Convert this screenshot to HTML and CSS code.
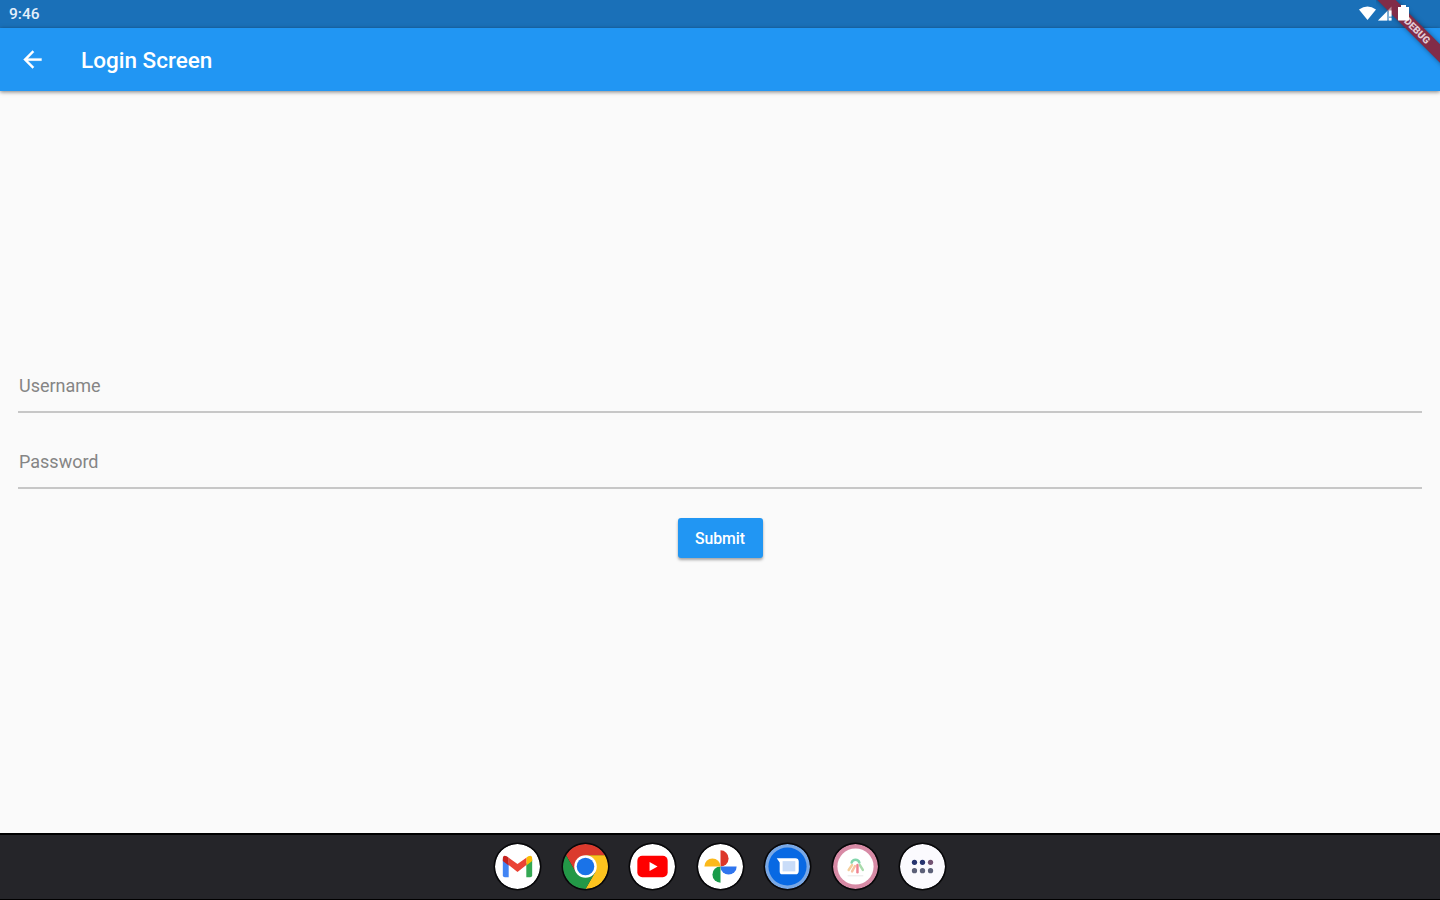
FILE: index.html
```html
<!DOCTYPE html>
<html lang="en">
<head>
    <meta charset="UTF-8">
    <meta name="viewport" content="width=device-width, initial-scale=1.0">
    <title>Login Screen</title>
    <link rel="stylesheet" href="styles.css">
</head>
<body>
    <div class="status-bar">
        <span class="clock">9:46</span>
        <svg class="status-icons" width="54" height="18" viewBox="0 0 54 18">
            <path d="M1 5.500 Q9.500 -0.500 18 5.500 L9.500 16 Z" fill="#fff"/>
            <path d="M20 16.500 L33.500 2.500 V16.500 Z" fill="#fff" fill-opacity=".45"/>
            <path d="M20 16.500 L29 7.500 V16.500 Z M31 6.500 H33.500 V12.500 H31 Z M31 14 H33.500 V16.500 H31 Z" fill="#fff"/>
            <path d="M40 3 H43 V1 H48 V3 H51 V16 Q51 16.500 50.500 16.500 H40.500 Q40 16.500 40 16 Z" fill="#fff"/>
        </svg>
    </div>
    <div class="debug-corner"><div class="debug-banner">DEBUG</div></div>

    <header class="app-bar">
        <svg class="back" width="27" height="27" viewBox="0 0 24 24">
            <path d="M20 11H7.830l5.590-5.590L12 4l-8 8 8 8 1.410-1.410L7.830 13H20v-2z" fill="#fff" stroke="#fff" stroke-width=".3"/>
        </svg>
        <h1>Login Screen</h1>
    </header>

    <main>
        <form class="login-form">
            <input type="text" name="username" placeholder="Username">
            <input type="password" name="password" placeholder="Password">
            <button type="submit">Submit</button>
        </form>
    </main>

    <nav class="taskbar">
        <!-- Gmail -->
        <svg class="app" viewBox="0 0 46 46">
            <circle cx="23" cy="23" r="23" fill="#fff"/>
            <path d="M8 15.500 L14 20 V34 H10 Q8 34 8 32 Z" fill="#4285f4"/>
            <path d="M32 20 L38 15.500 V32 Q38 34 36 34 H32 Z" fill="#34a853"/>
            <path d="M32 14 L34 12.500 Q38 10.500 38 15 V17.500 L32 22 Z" fill="#fbbc04"/>
            <path d="M14 14 L23 20.500 L32 14 V21.500 L23 28.500 L14 21.500 Z" fill="#ea4335"/>
            <path d="M14 14 L12 12.500 Q8 10.500 8 15 V17.500 L14 22 Z" fill="#c5221f"/>
        </svg>
        <!-- Chrome -->
        <svg class="app" viewBox="0 0 46 46">
            <path d="M23 23 L13 28.700 L3.080 11.500 A23 23 0 0 1 42.920 11.500 H23 Z" fill="#db3a2d"/>
            <path d="M23 11.500 H42.920 A23 23 0 0 1 23 46 L33 28.700 Z" fill="#fcc31e"/>
            <path d="M3.080 11.500 L13 28.700 L33 28.700 L23 46 A23 23 0 0 1 3.080 11.500 Z" fill="#239847"/>
            <circle cx="23" cy="23" r="11.500" fill="#fff"/>
            <circle cx="23" cy="23" r="9" fill="#1a73e8"/>
        </svg>
        <!-- YouTube -->
        <svg class="app" viewBox="0 0 46 46">
            <circle cx="23" cy="23" r="23" fill="#fff"/>
            <rect x="7.500" y="12" width="31" height="22" rx="5" fill="#f00"/>
            <path d="M20 18.300 L28.200 23 L20 27.700 Z" fill="#fff"/>
        </svg>
        <!-- Photos -->
        <svg class="app" viewBox="0 0 46 46">
            <circle cx="23" cy="23" r="23" fill="#fff"/>
            <path d="M23 23 V6.500 A8.250 8.250 0 0 1 23 23 Z" fill="#dd3629"/>
            <path d="M23 23 H39.500 A8.250 8.250 0 0 1 23 23 Z" fill="#2f75ee"/>
            <path d="M23 23 V39.500 A8.250 8.250 0 0 1 23 23 Z" fill="#189b49"/>
            <path d="M23 23 H6.500 A8.250 8.250 0 0 1 23 23 Z" fill="#fbb91b"/>
        </svg>
        <!-- Messages -->
        <svg class="app" viewBox="0 0 46 46">
            <circle cx="23" cy="23" r="23" fill="#79a8e5"/>
            <circle cx="23" cy="23" r="19.500" fill="#0869e3"/>
            <path d="M12 14.500 H31 Q34.500 14.500 34.500 18 V27 Q34.500 31 31 31 H18 Q15 31 15 28 V19 Z" fill="#fff"/>
            <rect x="18" y="17.500" width="13" height="10.500" fill="#c9dcf8"/>
        </svg>
        <!-- Suggested app -->
        <svg class="app" viewBox="0 0 46 46">
            <circle cx="23" cy="23" r="23" fill="#d78aa5"/>
            <circle cx="23" cy="23" r="18.500" fill="#fff"/>
            <g fill="none" stroke-width="2.500" stroke-linecap="round">
                <path d="M19 19 A4.200 4.200 0 0 1 27 19" stroke="#83d6ad"/>
                <path d="M16 26.500 L19.500 21.500" stroke="#f4ce9c"/>
                <path d="M19.500 28 L22.500 22.500" stroke="#f7c2a2"/>
                <path d="M25 21.500 V29" stroke="#ef8291"/>
                <path d="M27.500 21.500 L30.500 26.500" stroke="#a9dbac"/>
            </g>
            <path d="M15 32.500 H31" stroke="#e7e7e7"/>
        </svg>
        <!-- All apps -->
        <svg class="app" viewBox="0 0 46 46">
            <circle cx="23" cy="23" r="23" fill="#fbfafe"/>
            <g fill="#27346f">
                <circle cx="14.800" cy="18.700" r="2.700"/>
                <circle cx="23" cy="18.700" r="2.700"/>
                <circle cx="31.200" cy="18.700" r="2.700" fill="#735373"/>
            </g>
            <g fill="#5c6078">
                <circle cx="14.800" cy="27.300" r="2.700"/>
                <circle cx="23" cy="27.300" r="2.700"/>
                <circle cx="31.200" cy="27.300" r="2.700"/>
            </g>
        </svg>
    </nav>
</body>
</html>
```
FILE: styles.css
```css
* {
    box-sizing: border-box;
}
body {
    margin: 0;
    height: 100vh;
    display: flex;
    flex-direction: column;
    position: relative;
    overflow: hidden;
    background-color: #fafafa;
    font-family: Roboto, sans-serif;
}
.status-bar {
    height: 28px;
    padding: 0 28px 0 9px;
    display: flex;
    justify-content: space-between;
    align-items: center;
    background-color: #1a70b8;
    color: #e4effa;
}
.clock {
    font-size: 15.5px;
    font-weight: 500;
}
.status-icons {
    position: relative;
    z-index: 3;
    margin-bottom: 2px;
}
.debug-corner {
    position: absolute;
    top: 0;
    right: 0;
    width: 64px;
    height: 70px;
    overflow: hidden;
    z-index: 2;
}
.debug-banner {
    position: absolute;
    top: 21px;
    left: -17px;
    width: 110px;
    height: 13px;
    padding-left: 9px;
    transform: rotate(45deg);
    background-color: #812c48;
    box-shadow: 0 0 5px rgba(0, 0, 0, 0.4);
    color: #e3cbd5;
    font-size: 10px;
    font-weight: 900;
    line-height: 13px;
    text-align: center;
}
.app-bar {
    height: 63px;
    padding: 0 0 1px 19px;
    display: flex;
    align-items: center;
    gap: 35px;
    background-color: #2196f3;
    box-shadow: 0 1px 4px rgba(0, 0, 0, 0.5);
    color: #fff;
    z-index: 1;
}
.app-bar h1 {
    margin: 1px 0 0;
    font-size: 22.5px;
    font-weight: 500;
}
main {
    flex: 1;
    padding: 0 18px 7px;
    display: flex;
    flex-direction: column;
    justify-content: center;
}
.login-form {
    display: flex;
    flex-direction: column;
    align-items: center;
}
input {
    width: 100%;
    height: 54px;
    margin-bottom: 22px;
    padding: 0 0 0 1px;
    border: none;
    border-bottom: 2px solid #c7c7c7;
    background: none;
    font-family: inherit;
    font-size: 18px;
    outline: none;
}
input::placeholder {
    color: #858585;
}
button {
    width: 85px;
    height: 40px;
    margin-top: 7px;
    padding: 0;
    border: none;
    border-radius: 3px;
    background-color: #2196f3;
    box-shadow: 0 2px 3px rgba(0, 0, 0, 0.35);
    color: #fff;
    font-family: inherit;
    font-size: 15.75px;
    font-weight: 500;
}
.taskbar {
    height: 67px;
    display: flex;
    justify-content: center;
    align-items: center;
    gap: 22.5px;
    border-top: 2px solid #000;
    border-bottom: 1px solid #000;
    background-color: #252529;
}
.app {
    width: 45px;
    height: 45px;
    margin-bottom: 1px;
    border-radius: 50%;
    box-shadow: 0 0 0 1.5px #08080a;
}
```
